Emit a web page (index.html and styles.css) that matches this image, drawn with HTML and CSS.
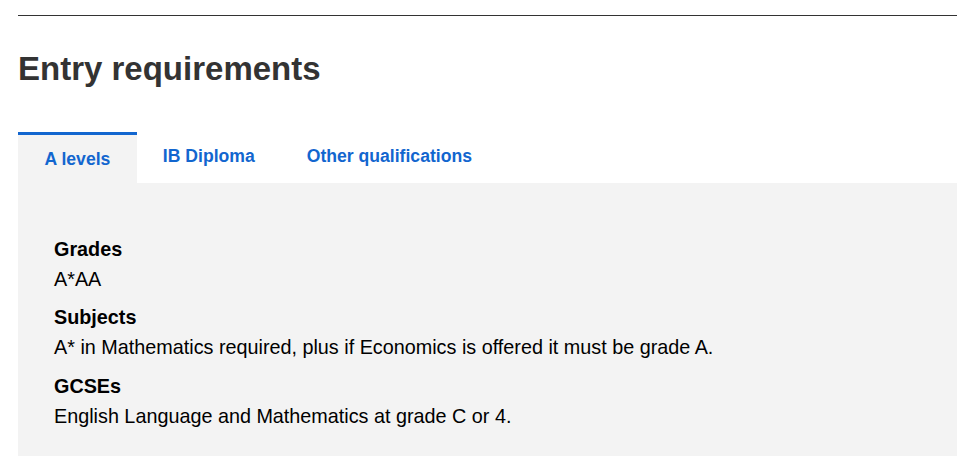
FILE: index.html
```html
<!DOCTYPE html>
<html lang="en">
<head>
<meta charset="utf-8">
<title>Entry requirements</title>
<link rel="stylesheet" href="styles.css">
</head>
<body>
<div class="page">
  <hr class="rule">
  <h2 class="title">Entry requirements</h2>
  <div class="tabs">
    <a class="tab active" href="#">A levels</a>
    <a class="tab" href="#">IB Diploma</a>
    <a class="tab" href="#">Other qualifications</a>
  </div>
  <div class="panel">
    <h3 class="label">Grades</h3>
    <p class="value">A*AA</p>
    <h3 class="label">Subjects</h3>
    <p class="value">A* in Mathematics required, plus if Economics is offered it must be grade A.</p>
    <h3 class="label">GCSEs</h3>
    <p class="value">English Language and Mathematics at grade C or 4.</p>
  </div>
</div>
</body>
</html>
```
FILE: styles.css
```css
html, body {
  margin: 0;
  padding: 0;
  background: #fff;
  overflow: hidden;
}
body {
  font-family: "Liberation Sans", Arial, sans-serif;
  color: #000;
}
.page {
  margin-left: 18px;
  width: 939px;
  padding-top: 15px;
}
.rule {
  margin: 0;
  border: 0;
  border-top: 1px solid #333;
  height: 0;
}
.title {
  margin: 0;
  padding: 33px 0 43px;
  font-size: 33px;
  line-height: 40px;
  font-weight: bold;
  color: #333;
}
.tabs {
  display: flex;
  height: 51px;
  align-items: flex-start;
}
.tab {
  display: block;
  font-size: 17.6px;
  font-weight: bold;
  color: #1266cf;
  text-decoration: none;
  padding: 13px 26px 0;
  line-height: 22px;
}
.active {
  border-top: 3px solid #1266cf;
  background: #f3f3f3;
  padding: 13px 26.5px 0;
  height: 35px;
}
.panel {
  background: #f3f3f3;
  padding: 52px 36px 40px;
}
.label {
  margin: 0;
  font-size: 19.8px;
  line-height: 29.7px;
  font-weight: bold;
}
.value {
  margin: 0 0 9px;
  font-size: 19.8px;
  line-height: 29.7px;
}
```
